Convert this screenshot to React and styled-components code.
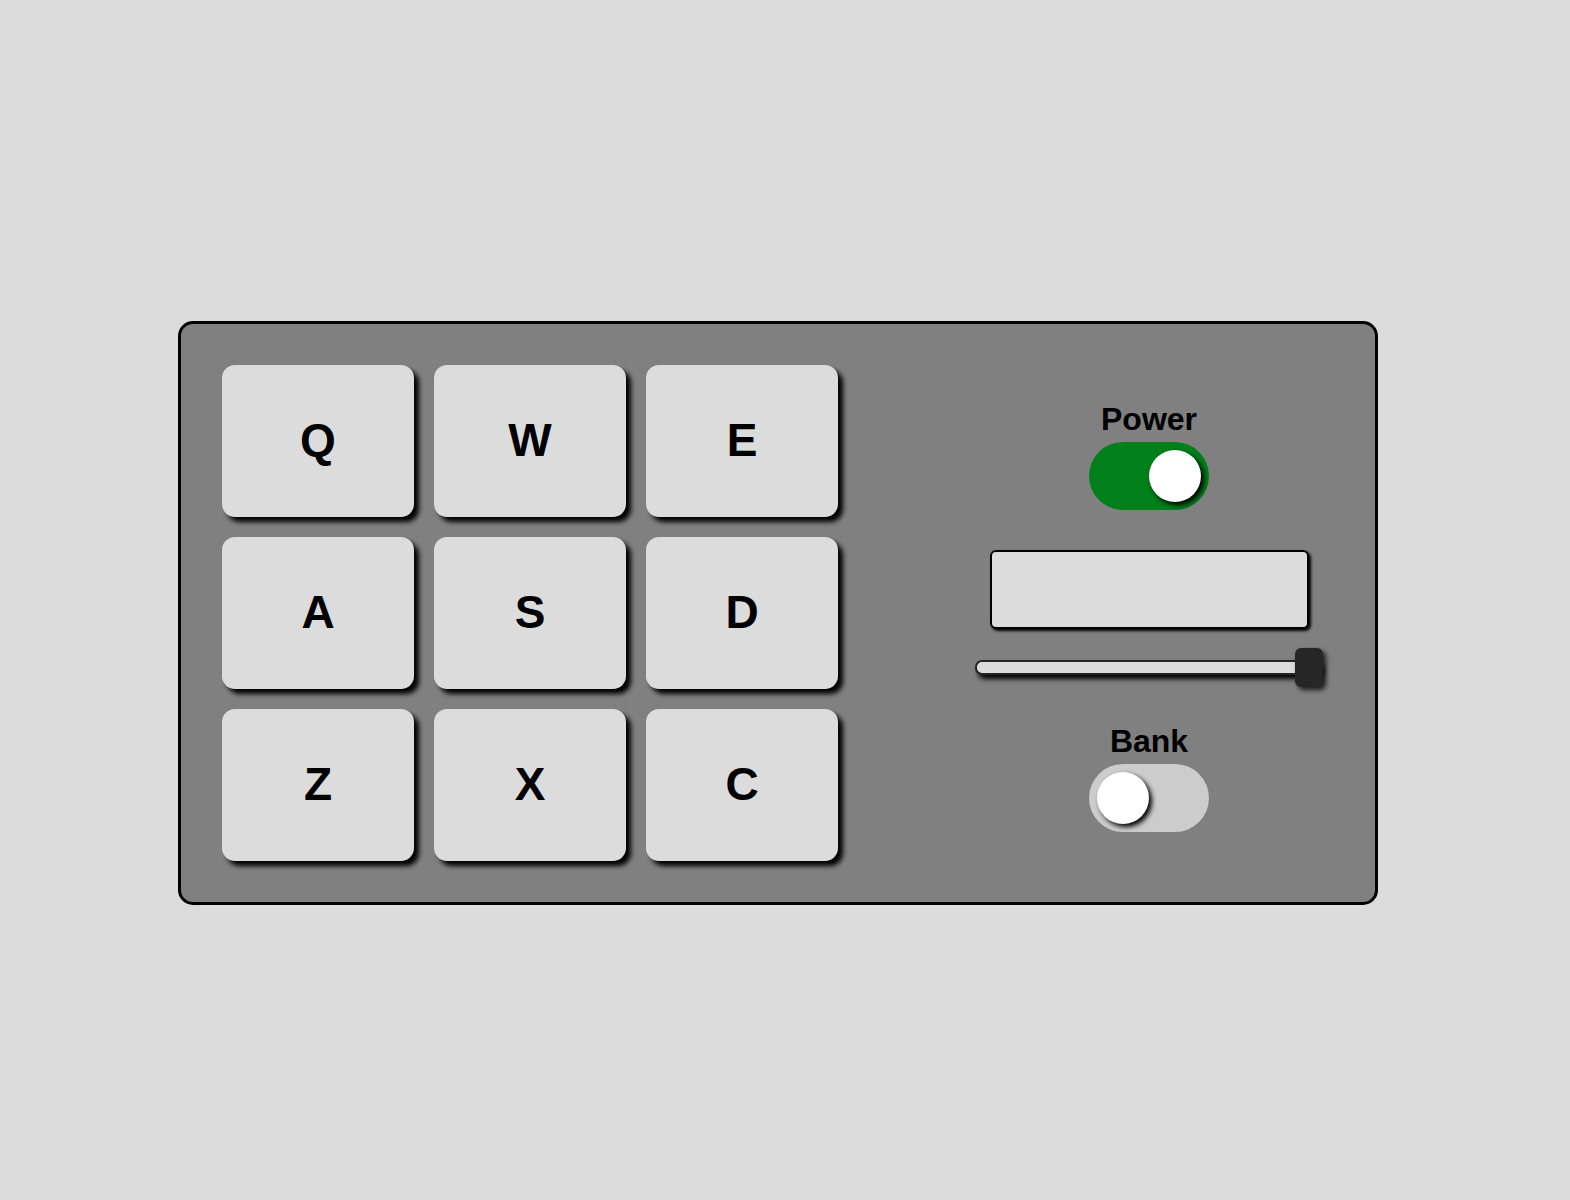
import styled, { createGlobalStyle } from "styled-components";

const GlobalStyle = createGlobalStyle`
  html, body {
    margin: 0;
    padding: 0;
    background: #dcdcdc;
    font-family: "Liberation Sans", Arial, sans-serif;
  }
`;

const KEYS = ["Q", "W", "E", "A", "S", "D", "Z", "X", "C"];

const App = () => {
  return (
    <Page>
      <GlobalStyle />
      <Machine>
        <PadGrid>
          {KEYS.map((k) => (
            <Pad key={k}>{k}</Pad>
          ))}
        </PadGrid>

        <Controls>
          <Label>Power</Label>
          <Toggle $on>
            <Knob $on />
          </Toggle>

          <Display />

          <Slider>
            <Track />
            <Thumb />
          </Slider>

          <Label $top={38}>Bank</Label>
          <Toggle>
            <Knob />
          </Toggle>
        </Controls>
      </Machine>
    </Page>
  );
};

const Page = styled.div`
  min-height: 1200px;
  box-sizing: border-box;
  padding: 321px 0 0 178px;
`;

const Machine = styled.div`
  width: 1200px;
  box-sizing: border-box;
  display: flex;
  justify-content: space-between;
  padding: 41px 38px 41px 41px;
  background: #808080;
  border: 3px solid #000;
  border-radius: 15px;
`;

const PadGrid = styled.div`
  display: grid;
  grid-template-columns: repeat(3, 192px);
  grid-auto-rows: 152px;
  gap: 20px;
`;

const Pad = styled.div`
  display: flex;
  align-items: center;
  justify-content: center;
  padding-bottom: 3px;
  box-sizing: border-box;
  background: #dcdcdc;
  border-radius: 13px;
  box-shadow: 5px 5px 5px #000;
  font-size: 46px;
  font-weight: bold;
  color: #000;
`;

const Controls = styled.div`
  width: 376px;
  display: flex;
  flex-direction: column;
  align-items: center;
  padding-top: 38px;
`;

const Label = styled.div`
  margin-top: ${(p) => (p.$top ? `${p.$top}px` : "0")};
  font-size: 32px;
  line-height: 32px;
  font-weight: bold;
  color: #000;
`;

const Toggle = styled.div`
  margin-top: 7px;
  width: 120px;
  height: 68px;
  box-sizing: border-box;
  padding: 8px;
  border-radius: 34px;
  display: flex;
  justify-content: ${(p) => (p.$on ? "flex-end" : "flex-start")};
  background: ${(p) => (p.$on ? "#007f1a" : "#cccccc")};
`;

const Knob = styled.div`
  width: 52px;
  height: 52px;
  border-radius: 50%;
  background: #fff;
  box-shadow: 3px 3px 5px #000;
`;

const Display = styled.div`
  margin-top: 40px;
  width: 319px;
  height: 79px;
  box-sizing: border-box;
  background: #dcdcdc;
  border: 2px solid #000;
  border-radius: 6px;
  box-shadow: 2px 2px 3px #000;
`;

const Slider = styled.div`
  margin-top: 19px;
  width: 348px;
  height: 39px;
  display: flex;
  align-items: center;
  justify-content: flex-end;
  position: relative;
`;

const Track = styled.div`
  position: absolute;
  left: 0;
  right: 2px;
  top: 12px;
  height: 15px;
  box-sizing: border-box;
  background: #dcdcdc;
  border: 2px solid #262626;
  border-radius: 7px;
  box-shadow: 3px 4px 5px #000;
`;

const Thumb = styled.div`
  position: relative;
  width: 28px;
  height: 39px;
  background: #262626;
  border-radius: 6px;
  box-shadow: 3px 3px 5px rgba(0, 0, 0, 0.8);
`;

export default App;
